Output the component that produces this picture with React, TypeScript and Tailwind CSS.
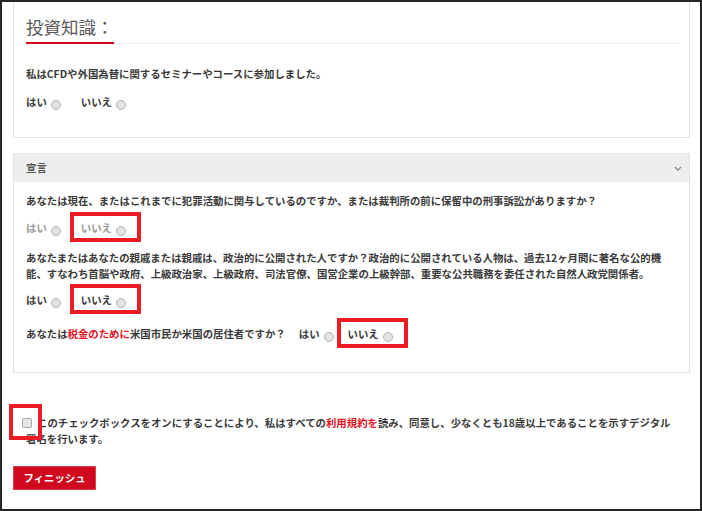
import React from "react";

// Investment knowledge + declaration step of an account-opening form.

const font = { fontFamily: '"Noto Sans CJK JP", "Noto Sans", sans-serif' };

function Radio() {
  return <span className="inline-block w-[10px] h-[10px] rounded-full border border-[#b3b3b3] bg-[#e3e3e3] translate-y-[3px]" />;
}

function Choice({ label, muted, marked }: { label: string; muted?: boolean; marked?: boolean }) {
  return (
    <span className={`relative inline-flex items-center gap-[4px] ${muted ? "text-[#9a9a9a]" : "text-[#3a3a3a]"}`}>
      <span>{label}</span>
      <Radio />
      {marked && <span className="absolute -left-[11px] -right-[15px] -top-[8px] -bottom-[6px] border-4 border-[#ec1c24]" />}
    </span>
  );
}

function Answers({ muted, className }: { muted?: boolean; className?: string }) {
  return (
    <div className={`flex items-center h-[28px] gap-[20px] ${className ?? ""}`}>
      <Choice label="はい" muted={muted} />
      <Choice label="いいえ" muted={muted} marked />
    </div>
  );
}

export default function App() {
  return (
    <div style={font} className="w-[702px] h-[511px] border-2 border-[#262626] bg-white overflow-hidden text-[10.4px] leading-[16px] font-bold text-[#3a3a3a]">
      <div className="ml-[11px] mr-[10px]">
        {/* investment knowledge */}
        <section className="border-x border-b border-[#e2e2e2] pl-[12px] pr-[11px] pb-[27px]">
          <h2 style={font} className="pt-[13px] text-[17.5px] leading-[24px] font-normal text-[#5a5a5a]">投資知識：</h2>
          <div className="flex items-center mt-[3px] h-[2px]">
            <span className="w-[88px] h-[2px] bg-[#d0021b]" />
            <span className="flex-1 border-t border-dotted border-[#dcdcdc]" />
          </div>
          <p className="mt-[22px]">私はCFDや外国為替に関するセミナーやコースに参加しました。</p>
          <div className="flex items-center mt-[12px] h-[16px] gap-[20px]">
            <span className="inline-flex items-center gap-[4px]">はい<Radio /></span>
            <span className="inline-flex items-center gap-[4px]">いいえ<Radio /></span>
          </div>
        </section>

        {/* declaration */}
        <section className="mt-[15px] border border-[#e2e2e2]">
          <div className="h-[28px] bg-[#eeeeee] pl-[12px] pr-[7px] flex items-center justify-between text-[#555]">
            <span>宣言</span>
            <svg width="8" height="5" viewBox="0 0 8 5" fill="none" stroke="#8a8a8a" strokeWidth="1.3">
              <path d="M1 1l3 3 3-3" />
            </svg>
          </div>
          <div className="pl-[12px] pr-[11px] pt-[11px] pb-[24px]">
            <p>あなたは現在、またはこれまでに犯罪活動に関与しているのですか、または裁判所の前に保留中の刑事訴訟がありますか？</p>
            <Answers muted className="mt-[5px]" />
            <p className="mt-[8px]">
              あなたまたはあなたの親戚または親戚は、政治的に公開された人ですか？政治的に公開されている人物は、過去12ヶ月間に著名な公的機能、すなわち首脳や政府、上級政治家、上級政府、司法官僚、国営企業の上級幹部、重要な公共職務を委任された自然人政党関係者。
            </p>
            <Answers className="mt-[4px]" />
            <div className="flex items-center h-[28px] mt-[6px]">
              <span>
                あなたは<span className="text-[#e3101e]">税金のために</span>米国市民か米国の居住者ですか？
              </span>
              <span className="ml-[13px]"><Choice label="はい" /></span>
              <span className="ml-[14px]"><Choice label="いいえ" marked /></span>
            </div>
          </div>
        </section>

        {/* agreement */}
        <p className="mt-[42px] pl-[13px] pr-[11px]">
          <span className="relative inline-block -ml-[4px] mr-[5px] align-[-1px]">
            <span className="block w-[10px] h-[10px] rounded-[2px] border border-[#a8a8a8] bg-[#e6e6e6]" />
            <span className="absolute -left-[13px] -right-[10px] -top-[14px] -bottom-[12px] border-4 border-[#ec1c24]" />
          </span>
          このチェックボックスをオンにすることにより、私はすべての<span className="text-[#e3101e]">利用規約を</span>読み、同意し、少なくとも18歳以上であることを示すデジタル署名を行います。
        </p>

        <button className="mt-[19px] w-[83px] h-[24px] bg-[#cf0a1e] border border-[#e0404c] text-white text-[10.4px] font-bold">
          フィニッシュ
        </button>
      </div>
    </div>
  );
}
